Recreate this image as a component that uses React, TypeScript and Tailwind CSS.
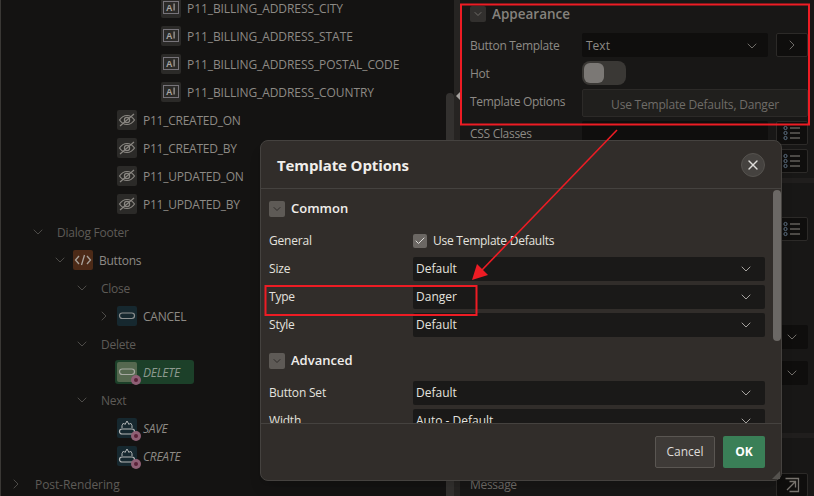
import { ChevronDown, ChevronRight, X, Check } from "lucide-react";
import type { ReactNode } from "react";

const font = { fontFamily: '"Open Sans", "Noto Sans", sans-serif' };

function AiIcon() {
  return (
    <svg viewBox="0 0 20 20" className="h-5 w-5">
      <rect width="20" height="20" rx="2" fill="#2b2a28" />
      <rect x="2.5" y="3.5" width="15" height="12" fill="none" stroke="#77747a" strokeWidth="1" />
      <text x="5" y="12.5" fontSize="9" fontWeight="700" fill="#a9a6a2" fontFamily="Liberation Sans">A</text>
      <rect x="12.5" y="5.5" width="1.2" height="7" fill="#a9a6a2" />
    </svg>
  );
}

function HiddenIcon() {
  return (
    <svg viewBox="0 0 20 20" className="h-5 w-5">
      <rect width="20" height="20" rx="2" fill="#2b2a28" />
      <path d="M2.5 10c2-3 4.6-4.5 7.5-4.5s5.500 1.500 7.500 4.500c-2 3-4.600 4.500-7.500 4.500S4.500 13 2.500 10z" fill="none" stroke="#8a8782" strokeWidth="1.2" />
      <circle cx="10" cy="10" r="2.6" fill="none" stroke="#8a8782" strokeWidth="1.2" />
      <path d="M3 16 17 4" stroke="#8a8782" strokeWidth="1.2" />
    </svg>
  );
}

function CodeIcon() {
  return (
    <svg viewBox="0 0 20 20" className="h-5 w-5">
      <rect width="20" height="20" rx="2" fill="#4c2a17" />
      <path d="M6 6 2.500 10 6 14M14 6l3.500 4-3.500 4M11.500 5 8.500 15" fill="none" stroke="#a9a39c" strokeWidth="1.3" />
    </svg>
  );
}

function ButtonIcon({ bg, stroke }: { bg: string; stroke: string }) {
  return (
    <svg viewBox="0 0 20 20" className="h-5 w-5">
      <rect width="20" height="20" rx="2" fill={bg} />
      <rect x="2.5" y="7" width="15" height="5.5" rx="2.7" fill="none" stroke={stroke} strokeWidth="1.2" />
    </svg>
  );
}

function HotButtonIcon() {
  return (
    <svg viewBox="0 0 20 20" className="h-5 w-5">
      <rect width="20" height="20" rx="2" fill="#16282f" />
      <path d="M5 10V7.500L6.500 5 8 6.500 10 3l2 3.500L13.500 5 15 7.500V10" fill="none" stroke="#b5b8b8" strokeWidth="1" />
      <rect x="2.5" y="11" width="15" height="5" rx="2.500" fill="none" stroke="#b5b8b8" strokeWidth="1.2" />
    </svg>
  );
}

function Badge() {
  return (
    <span className="absolute -bottom-[3px] -right-[4px] flex h-[10px] w-[10px] items-center justify-center rounded-full bg-[#8f5f75]">
      <span className="h-[4px] w-[4px] rounded-full bg-[#5a2238]" />
    </span>
  );
}

function TreeRow({
  left,
  icon,
  chevron,
  children,
  italic,
  dim,
  wide,
}: {
  left: string;
  icon?: ReactNode;
  chevron?: "down" | "right";
  children: ReactNode;
  italic?: boolean;
  dim?: boolean;
  wide?: boolean;
}) {
  const chevronClass = `absolute h-4 w-4 text-[#4d4b48] ${icon ? "-ml-[21px]" : "-ml-[27px]"}`;
  return (
    <div className={`relative flex h-7 items-center ${left}`}>
      {chevron === "down" && <ChevronDown className={chevronClass} strokeWidth={1.5} />}
      {chevron === "right" && <ChevronRight className={chevronClass} strokeWidth={1.5} />}
      {icon && <span className="relative mr-1.5 h-5 w-5">{icon}</span>}
      <span
        className={`mt-[2px] whitespace-nowrap text-xs ${wide ? "tracking-[-0.08px]" : "tracking-[-0.25px]"} ${italic ? "italic" : ""} ${
          dim ? "text-[#5e5b57]" : "text-[#8d8a85]"
        }`}
      >
        {children}
      </span>
    </div>
  );
}

function Tree() {
  return (
    <div className="-mt-[6px] h-[502px] w-[446px] shrink-0 border-l border-[#3a3835]">
      {["CITY", "STATE", "POSTAL_CODE", "COUNTRY"].map((n) => (
        <TreeRow key={n} left="pl-[160px]" icon={<AiIcon />} wide>
          P11_BILLING_ADDRESS_{n}
        </TreeRow>
      ))}
      {["CREATED_ON", "CREATED_BY", "UPDATED_ON", "UPDATED_BY"].map((n) => (
        <TreeRow key={n} left="pl-[116px]" icon={<HiddenIcon />}>
          P11_{n}
        </TreeRow>
      ))}
      <TreeRow left="pl-[56px]" chevron="down" dim>
        Dialog Footer
      </TreeRow>
      <TreeRow left="pl-[72px]" chevron="down" icon={<CodeIcon />}>
        Buttons
      </TreeRow>
      <TreeRow left="pl-[100px]" chevron="down" dim>
        Close
      </TreeRow>
      <TreeRow left="pl-[116px]" chevron="right" icon={<ButtonIcon bg="#16282f" stroke="#8d9090" />}>
        CANCEL
      </TreeRow>
      <TreeRow left="pl-[100px]" chevron="down" dim>
        Delete
      </TreeRow>
      <div className="flex h-7 items-center pl-[114px]">
        <div className="flex h-[24px] w-[79px] items-center rounded-[3px] bg-[#1c4029] pl-[2px]">
          <span className="relative mr-1.5 h-5 w-5">
            <ButtonIcon bg="#55684f" stroke="#a5a8a0" />
            <Badge />
          </span>
          <span className="mt-[2px] text-xs italic tracking-[-0.25px] text-[#8d9a90]">DELETE</span>
        </div>
      </div>
      <TreeRow left="pl-[100px]" chevron="down" dim>
        Next
      </TreeRow>
      <TreeRow left="pl-[116px]" icon={<><HotButtonIcon /><Badge /></>} italic>
        SAVE
      </TreeRow>
      <TreeRow left="pl-[116px]" icon={<><HotButtonIcon /><Badge /></>} italic>
        CREATE
      </TreeRow>
      <TreeRow left="pl-[34px]" chevron="right" dim wide>
        Post-Rendering
      </TreeRow>
    </div>
  );
}

function ListIcon() {
  return (
    <svg viewBox="0 0 18 16" className="h-[16px] w-[18px]">
      {[3, 8, 13].map((y) => (
        <g key={y}>
          <circle cx="2.5" cy={y} r="1.6" fill="none" stroke="#5d7082" strokeWidth="1" />
          <path d={`M7 ${y}h10`} stroke="#8a8580" strokeWidth="1" />
        </g>
      ))}
    </svg>
  );
}

function OpenIcon() {
  return (
    <svg viewBox="0 0 16 16" className="h-4 w-4" fill="none" stroke="#77736e" strokeWidth="1.3">
      <path d="M1.500 1.500h13v13h-9" />
      <path d="M3 13 11 5M5.500 4.500h6v6" />
    </svg>
  );
}

function SideButton({ children }: { children?: ReactNode }) {
  return (
    <div className="flex h-6 w-[32px] shrink-0 items-center justify-center rounded-[2px] border border-[#2c2a28] bg-[#0f0e0d] text-[#6f6c68]">
      {children}
    </div>
  );
}

function PropLabel({ children }: { children: ReactNode }) {
  return <div className="mt-[2px] w-[112px] shrink-0 text-xs tracking-[-0.3px] text-[#8d8a85]">{children}</div>;
}

function Properties() {
  return (
    <div className="flex h-[497px] min-w-0 flex-1 flex-col bg-[#181716] pl-[10px] pr-[6px]">
      <div className="flex h-[31px] items-center gap-[6px] pb-[3px]">
        <span className="flex h-4 w-4 items-center justify-center rounded-[2px] bg-[#32302e]">
          <ChevronDown className="h-3 w-3 text-[#6f6c68]" />
        </span>
        <span className="text-[13.5px] font-semibold text-[#85827d]">Appearance</span>
      </div>
      <div className="flex h-7 shrink-0 items-center">
        <PropLabel>Button Template</PropLabel>
        <div className="flex h-6 w-[186px] items-center justify-between rounded-[2px] bg-[#0f0e0d] px-1 pt-[2px] text-xs text-[#8d8a85]">
          Text
          <ChevronDown className="mr-1 h-4 w-4 text-[#6f6c68]" strokeWidth={1.5} />
        </div>
        <div className="ml-2">
          <SideButton>
            <ChevronRight className="h-4 w-4" strokeWidth={1.5} />
          </SideButton>
        </div>
      </div>
      <div className="flex h-7 shrink-0 items-center">
        <PropLabel>Hot</PropLabel>
        <div className="flex h-6 w-11 items-center rounded-lg bg-[#3a3835] pl-0.5">
          <span className="h-5 w-5 rounded-md bg-[#7b7875]" />
        </div>
      </div>
      <div className="flex h-7 shrink-0 items-center">
        <PropLabel>Template Options</PropLabel>
        <div className="mt-[4px] flex h-7 w-[226px] items-center justify-center rounded-[2px] border border-[#2c2a28] bg-[#201f1d] pt-[3px] text-xs tracking-[-0.2px] text-[#6f6c68]">
          Use Template Defaults, Danger
        </div>
      </div>
      <div className="mt-[4px] flex h-7 shrink-0 items-center">
        <PropLabel>CSS Classes</PropLabel>
        <div className="h-6 w-[186px] rounded-[2px] bg-[#0f0e0d]" />
        <div className="ml-2">
          <SideButton>
            <ListIcon />
          </SideButton>
        </div>
      </div>
      <div className="flex h-7 shrink-0 items-center justify-end">
        <SideButton>
          <ListIcon />
        </SideButton>
      </div>
      <div className="-ml-[10px] -mr-[6px] mt-[3px] h-[5px] shrink-0 bg-[#201e1d]" />
      <div className="mt-[32px] flex h-7 shrink-0 items-center justify-end">
        <SideButton>
          <ListIcon />
        </SideButton>
      </div>
      <div className="mt-[80px] flex h-7 shrink-0 items-center justify-end">
        <div className="flex h-6 w-[32px] items-center justify-center rounded-[2px] bg-[#0f0e0d] text-[#6f6c68]">
          <ChevronDown className="h-4 w-4" strokeWidth={1.5} />
        </div>
      </div>
      <div className="mt-2 flex h-7 shrink-0 items-center justify-end">
        <div className="flex h-6 w-[32px] items-center justify-center rounded-[2px] bg-[#0f0e0d] text-[#6f6c68]">
          <ChevronDown className="h-4 w-4" strokeWidth={1.5} />
        </div>
      </div>
      <div className="-ml-[10px] -mr-[6px] mt-[46px] h-[5px] shrink-0 bg-[#201e1d]" />
      <div className="mt-auto flex h-6 shrink-0 items-center justify-between">
        <span className="text-xs tracking-[-0.3px] text-[#6f6c68]">Message</span>
        <SideButton>
          <OpenIcon />
        </SideButton>
      </div>
    </div>
  );
}

function SectionHead({ children }: { children: ReactNode }) {
  return (
    <div className="mb-[2px] flex h-8 items-center gap-[6px]">
      <span className="flex h-4 w-4 items-center justify-center rounded-[2px] bg-[#5e5a56]">
        <ChevronDown className="h-3 w-3 text-[#2f2c2a]" />
      </span>
      <span className="text-[13px] font-semibold text-[#f0eeeb]">{children}</span>
    </div>
  );
}

function OptionRow({ label, value }: { label: string; value: string }) {
  return (
    <div className="flex h-7 items-center">
      <div className="w-[144px] shrink-0 text-xs tracking-[-0.2px] text-[#e4e2df]">{label}</div>
      <div className="flex h-6 w-[352px] items-center justify-between rounded-[2px] bg-[#1a1918] px-[3px] text-xs text-[#e4e2df]">
        {value}
        <ChevronDown className="mr-2 h-4 w-4 text-[#a5a29e]" strokeWidth={1.5} />
      </div>
    </div>
  );
}

function Modal() {
  return (
    <div className="absolute left-[260px] top-[140px] flex h-[341px] w-[522px] flex-col rounded-lg border border-[#45423f] bg-[#312d2a] shadow-lg">
      <div className="flex h-[48px] shrink-0 items-center justify-between border-b border-[#45423f] pl-4 pr-[16px]">
        <span className="mt-[1px] text-[15px] font-bold tracking-[-0.12px] text-[#f0eeeb]">Template Options</span>
        <span className="flex h-6 w-6 items-center justify-center rounded-full border border-[#55524e] bg-[#45423f]">
          <X className="h-4 w-4 text-[#dedcd9]" />
        </span>
      </div>
      <div className="relative min-h-0 flex-1 overflow-hidden pl-2 pt-[4px]">
        <SectionHead>Common</SectionHead>
        <div className="flex h-7 items-center">
          <div className="w-[144px] shrink-0 text-xs tracking-[-0.2px] text-[#e4e2df]">General</div>
          <span className="mr-1.5 flex h-3.5 w-3.5 items-center justify-center rounded-[2px] bg-[#6b6763]">
            <Check className="h-3 w-3 text-[#dedcd9]" />
          </span>
          <span className="text-xs tracking-[-0.25px] text-[#e4e2df]">Use Template Defaults</span>
        </div>
        <OptionRow label="Size" value="Default" />
        <OptionRow label="Type" value="Danger" />
        <OptionRow label="Style" value="Default" />
        <div className="mt-[6px]">
          <SectionHead>Advanced</SectionHead>
        </div>
        <OptionRow label="Button Set" value="Default" />
        <OptionRow label="Width" value="Auto - Default" />
        <div className="absolute right-0 top-[1px] h-[151px] w-2 rounded-full bg-[#6b6865]" />
      </div>
      <div className="relative flex h-[57px] shrink-0 items-center justify-end gap-2 border-t border-[#45423f] pr-4">
        <span className="flex h-8 w-[60px] items-center justify-center rounded-[2px] border border-[#5a5652] bg-[#3e3a37] text-xs text-[#dedcd9]">
          Cancel
        </span>
        <span className="flex h-8 w-[42px] items-center justify-center rounded-[2px] bg-[#3a7f57] text-xs font-bold text-white">
          OK
        </span>
        <svg className="absolute bottom-[1px] right-[1px]" width="8" height="8" viewBox="0 0 8 8">
          <path d="M8 0V8H0Z" fill="#55524e" />
        </svg>
      </div>
    </div>
  );
}

export default function App() {
  return (
    <div className="relative h-[496px] w-[814px] overflow-hidden bg-[#141312]" style={font}>
      <div className="flex h-full">
        <Tree />
        <div className="relative h-full w-[14px] shrink-0">
          <div className="absolute left-0 top-[93px] h-[403px] w-[8px] rounded-t-full bg-[#33312f]" />
          <div className="absolute bottom-0 right-0 top-0 w-[6px] bg-[#262422]" />
          <div className="absolute left-[10px] top-[92px] h-0 w-0 border-y-[4px] border-r-[4px] border-y-transparent border-r-[#a5a29e]" />
        </div>
        <Properties />
      </div>
      <Modal />
      {/* red callouts drawn over the screenshot */}
      <svg className="pointer-events-none absolute inset-0" width="814" height="496" fill="none">
        <rect x="461" y="4.5" width="348" height="120" stroke="#ed1c24" strokeWidth="2" />
        <rect x="265.5" y="286" width="211" height="29" stroke="#ed1c24" strokeWidth="2" />
        <path d="M617 130 482 270" stroke="#ed1c24" strokeWidth="1.6" />
        <path d="M472 280 488 275 477 264Z" fill="#ed1c24" />
      </svg>
    </div>
  );
}
